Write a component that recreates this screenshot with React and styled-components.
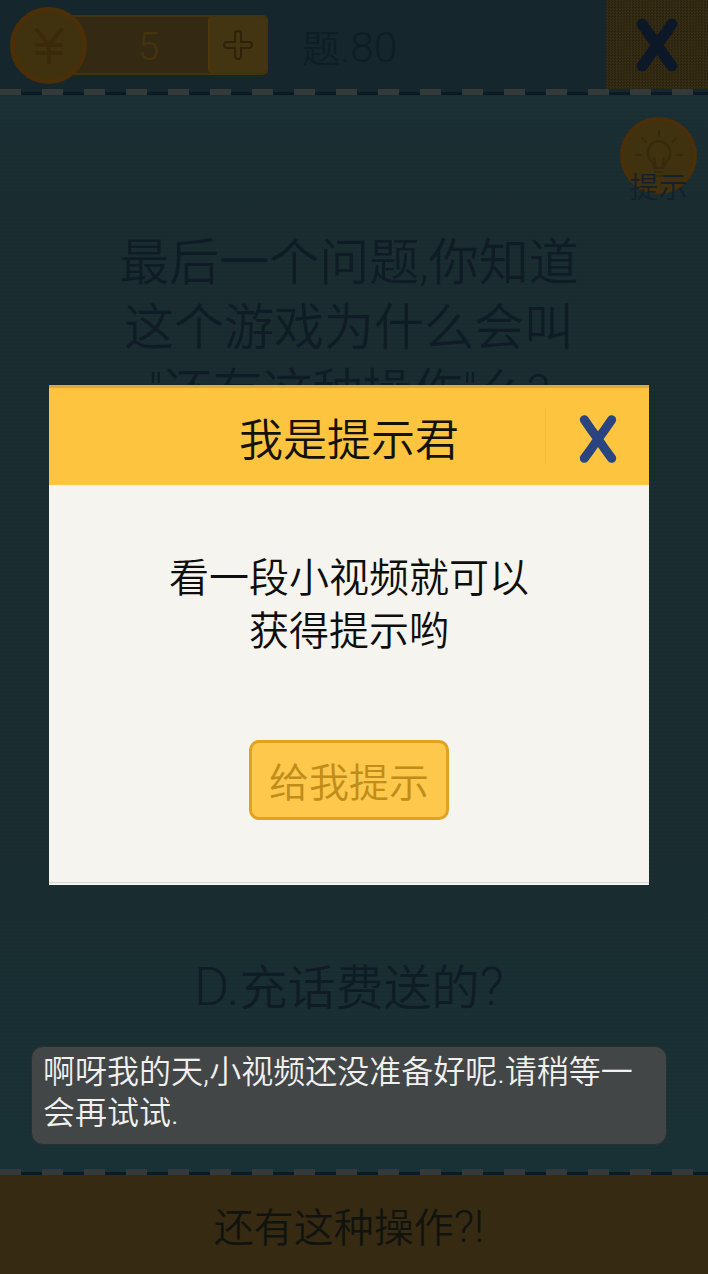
import React from 'react';
import styled, { createGlobalStyle } from 'styled-components';

const GlobalStyle = createGlobalStyle`
  html, body {
    margin: 0;
    padding: 0;
    background: #1a2d30;
  }

  body {
    font-family: Roboto, "Noto Sans CJK SC", sans-serif;
    font-weight: 350;
  }
`;

const Page = styled.div`
  position: relative;
  display: flex;
  flex-direction: column;
  width: 708px;
  height: 1274px;
  overflow: hidden;
`;

const Header = styled.header`
  display: flex;
  align-items: stretch;
  height: 89px;
  background: #15272c;
`;

const Wallet = styled.div`
  display: flex;
  align-items: center;
  margin-left: 10px;
  width: 258px;
`;

const Coin = styled.div`
  position: relative;
  z-index: 1;
  display: flex;
  flex: none;
  align-items: center;
  justify-content: center;
  box-sizing: border-box;
  width: 77px;
  height: 77px;
  margin-top: 2px;
  border: 5px solid #4a2f08;
  border-radius: 50%;
  background: #40320f;
`;

const Counter = styled.div`
  display: flex;
  flex: 1;
  align-items: stretch;
  height: 60px;
  margin-left: -17px;
  box-sizing: border-box;
  border: 2px solid #43330e;
  border-radius: 0 5px 5px 0;
  background: #342a13;
`;

const CoinCount = styled.span`
  flex: 1;
  padding-left: 17px;
  color: #46340d;
  font-size: 38px;
  font-weight: 300;
  line-height: 60px;
  text-align: center;
`;

const PlusButton = styled.div`
  display: flex;
  flex: none;
  align-items: center;
  justify-content: center;
  width: 56px;
  border-left: 2px solid #4e370a;
  border-radius: 4px;
  background: #433511;
`;

const Level = styled.span`
  align-self: center;
  margin-left: 34px;
  margin-top: 2px;
  color: #0f1d26;
  font-size: 38px;
`;

const CloseBox = styled.div`
  display: flex;
  align-items: center;
  justify-content: center;
  width: 102px;
  margin-left: auto;
  background-color: #352b12;
  background-image: repeating-conic-gradient(#382d12 0 25%, #272310 0 50%);
  background-size: 3px 3px;
`;

const Dash = styled.div`
  flex: none;
  height: 6px;
  background-color: ${(p) => p.$base};
  background-image:
    repeating-linear-gradient(90deg, #343a3a 0 21px, transparent 21px 42px),
    linear-gradient(#0c1a26, #0c1a26);
  background-size: 100% 100%, 100% 3px;
  background-position: 0 0, 0 100%;
  background-repeat: no-repeat;
`;

const Main = styled.main`
  display: flex;
  flex: 1;
  flex-direction: column;
  align-items: center;
  padding-right: 10px;
  background:
    repeating-linear-gradient(0deg, rgba(0, 0, 0, 0.05) 0 2px, transparent 2px 4px),
    linear-gradient(#1b3035 0, #1a2d30 12%, #1a2d30 70%, #1a3237 100%);
`;

const HintButton = styled.div`
  display: flex;
  flex-direction: column;
  align-self: flex-end;
  align-items: center;
  margin: 22px 1px 0 0;
`;

const HintCoin = styled.div`
  display: flex;
  align-items: center;
  justify-content: center;
  box-sizing: border-box;
  width: 77px;
  height: 77px;
  border: 4px solid #4a2f08;
  border-radius: 50%;
  background: #40320f;
`;

const HintLabel = styled.span`
  margin-top: -20px;
  color: #12222c;
  font-size: 29px;
  line-height: 28px;
`;

const Question = styled.h1`
  margin: 29px 0 0;
  color: #0f1c25;
  font-size: 50px;
  font-weight: inherit;
  line-height: 65px;
  text-align: center;
`;

const Option = styled.p`
  margin: auto 0 150px;
  color: #0f1c25;
  font-size: 48px;
  line-height: 60px;
`;

const Latin = styled.span`
  font-size: 1.12em;
  font-weight: 300;
`;

const Footer = styled.footer`
  flex: none;
  height: 99px;
  padding-right: 10px;
  background: #362a12;
  color: #11130f;
  font-size: 40px;
  line-height: 104px;
  text-align: center;
`;

const Overlay = styled.div`
  position: absolute;
  inset: 0;
  display: flex;
  align-items: center;
  justify-content: center;
  padding: 0 10px 4px 0;
`;

const Dialog = styled.section`
  display: flex;
  flex-direction: column;
  width: 600px;
  height: 500px;
  background: #f5f4ee;
`;

const DialogHead = styled.div`
  display: grid;
  grid-template-columns: 104px 1fr 104px;
  align-items: center;
  box-sizing: border-box;
  height: 100px;
  border-top: 3px solid #d9ab40;
  background: #fcc43f;
`;

const DialogTitle = styled.h2`
  grid-column: 2;
  margin: 0;
  color: #141208;
  font-size: 44px;
  font-weight: inherit;
  text-align: center;
`;

const DialogClose = styled.div`
  display: flex;
  align-items: center;
  justify-content: center;
  box-sizing: border-box;
  height: 56px;
  padding-top: 4px;
  border-left: 1px solid #f3bd3e;
`;

const DialogBody = styled.div`
  display: flex;
  flex: 1;
  flex-direction: column;
  align-items: center;
  border-bottom: 1px solid #d5d4cf;
  margin-bottom: 2px;
`;

const DialogText = styled.p`
  margin: 67px 0 0;
  color: #0e0e0c;
  font-size: 40px;
  line-height: 53px;
  text-align: center;
`;

const GiveHint = styled.button`
  box-sizing: border-box;
  width: 200px;
  height: 80px;
  margin-top: 82px;
  padding: 0;
  border: 3px solid #e2a11f;
  border-radius: 10px;
  background: #fdc84b;
  color: #c08c1a;
  font-family: inherit;
  font-size: 40px;
  font-weight: inherit;
`;

const Toast = styled.div`
  position: absolute;
  left: 31px;
  bottom: 129px;
  box-sizing: border-box;
  width: 636px;
  height: 99px;
  padding: 5px 11px;
  border: 1px solid #2a2f31;
  border-radius: 12px;
  background: #424647;
  color: #f0f0ee;
  font-size: 32px;
  line-height: 41px;
`;

function CloseIcon({ width, height, color, stroke }) {
  return (
    <svg width={width} height={height} viewBox="0 0 36 44">
      <path
        d="M6 5 Q12 14 18 22 Q24 31 30 39 M30 5 Q24 14 18 22 Q12 31 6 39"
        fill="none"
        stroke={color}
        strokeWidth={stroke}
        strokeLinecap="round"
      />
    </svg>
  );
}

function YenIcon() {
  return (
    <svg width="30" height="36" viewBox="0 0 30 36" fill="none" stroke="#3a2a0a" strokeWidth="4" strokeLinecap="round">
      <path d="M3 2 L15 17 L27 2 M15 17 V34 M3 17 H27 M3 25 H27" />
    </svg>
  );
}

function PlusIcon() {
  return (
    <svg width="30" height="30" viewBox="0 0 30 30" fill="none">
      <path
        d="M12 4 a3 3 0 0 1 6 0 V12 H26 a3 3 0 0 1 0 6 H18 V26 a3 3 0 0 1 -6 0 V18 H4 a3 3 0 0 1 0 -6 H12 Z"
        stroke="#2e2309"
        strokeWidth="2"
      />
    </svg>
  );
}

function BulbIcon() {
  return (
    <svg width="50" height="54" viewBox="0 0 50 54" fill="none" stroke="#352a0c" strokeWidth="2" strokeLinecap="round">
      <path d="M25 12 a12 12 0 0 0 -7 21 q2 2 2 6 h10 q0 -4 2 -6 a12 12 0 0 0 -7 -21 Z" />
      <path d="M21 43 h8 M22 47 h6 M25 2 v5 M8 9 l4 4 M42 9 l-4 4 M2 26 h5 M43 26 h5" />
      <path d="M22 39 l-2 -10 M28 39 l2 -10" />
    </svg>
  );
}

export default function App() {
  return (
    <Page>
      <GlobalStyle />
      <Header>
        <Wallet>
          <Coin>
            <YenIcon />
          </Coin>
          <Counter>
            <CoinCount>5</CoinCount>
            <PlusButton>
              <PlusIcon />
            </PlusButton>
          </Counter>
        </Wallet>
        <Level>
          题<Latin>.80</Latin>
        </Level>
        <CloseBox>
          <CloseIcon width="46" height="54" color="#0c1828" stroke="9" />
        </CloseBox>
      </Header>
      <Dash $base="#15272c" />
      <Main>
        <HintButton>
          <HintCoin>
            <BulbIcon />
          </HintCoin>
          <HintLabel>提示</HintLabel>
        </HintButton>
        <Question>
          最后一个问题,你知道
          <br />
          这个游戏为什么会叫
          <br />
          "还有这种操作"么?
        </Question>
        <Option>
          <Latin>D.</Latin>充话费送的<Latin>?</Latin>
        </Option>
      </Main>
      <Dash $base="#1a3237" />
      <Footer>
        还有这种操作<Latin>?!</Latin>
      </Footer>

      <Overlay>
        <Dialog>
          <DialogHead>
            <DialogTitle>我是提示君</DialogTitle>
            <DialogClose>
              <CloseIcon width="42" height="50" color="#2a4480" stroke="8" />
            </DialogClose>
          </DialogHead>
          <DialogBody>
            <DialogText>
              看一段小视频就可以
              <br />
              获得提示哟
            </DialogText>
            <GiveHint>给我提示</GiveHint>
          </DialogBody>
        </Dialog>
      </Overlay>

      <Toast>啊呀我的天,小视频还没准备好呢.请稍等一会再试试.</Toast>
    </Page>
  );
}
